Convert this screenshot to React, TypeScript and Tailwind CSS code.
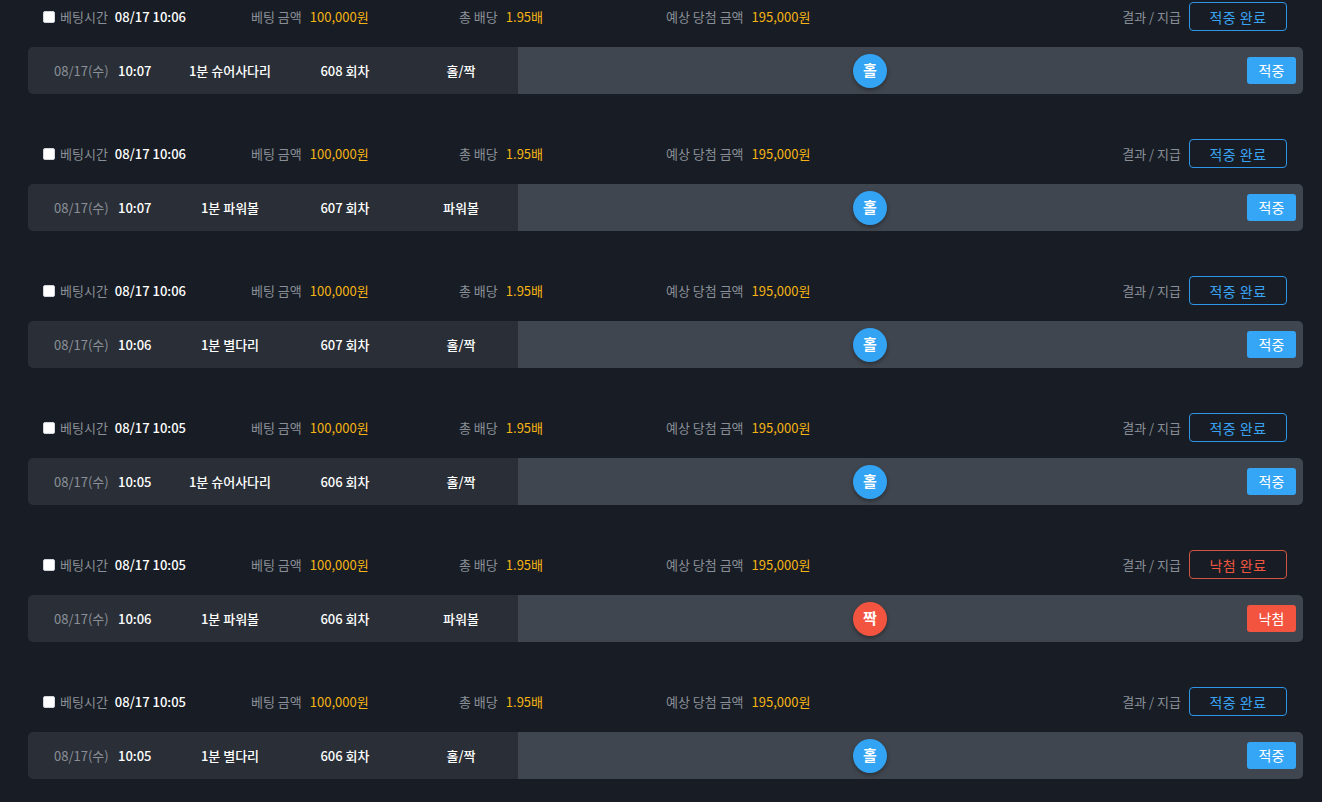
import React from 'react';

type Bet = {
  betTime: string;
  time: string;
  game: string;
  round: string;
  kind: string;
  pick: '홀' | '짝';
  win: boolean;
};

const BETS: Bet[] = [
  { betTime: '08/17 10:06', time: '10:07', game: '1분 슈어사다리', round: '608 회차', kind: '홀/짝', pick: '홀', win: true },
  { betTime: '08/17 10:06', time: '10:07', game: '1분 파워볼', round: '607 회차', kind: '파워볼', pick: '홀', win: true },
  { betTime: '08/17 10:06', time: '10:06', game: '1분 별다리', round: '607 회차', kind: '홀/짝', pick: '홀', win: true },
  { betTime: '08/17 10:05', time: '10:05', game: '1분 슈어사다리', round: '606 회차', kind: '홀/짝', pick: '홀', win: true },
  { betTime: '08/17 10:05', time: '10:06', game: '1분 파워볼', round: '606 회차', kind: '파워볼', pick: '짝', win: false },
  { betTime: '08/17 10:05', time: '10:05', game: '1분 별다리', round: '606 회차', kind: '홀/짝', pick: '홀', win: true },
];

const BetBlock: React.FC<{ bet: Bet }> = ({ bet }) => {
  return (
    <div className="mb-[45px]">
      <div className="flex items-center h-[29px] pl-[15px] pr-[16px] text-[13px] leading-none">
        <div className="w-[208px] flex items-center">
          <span className="w-[12px] h-[12px] rounded-[2px] bg-white border border-gray-300 mr-[5px]" />
          <span className="text-[#8a8f97]">베팅시간</span>
          <span className="ml-[7px] text-white font-medium">{bet.betTime}</span>
        </div>
        <div className="w-[208px] flex items-center">
          <span className="text-[#8a8f97]">베팅 금액</span>
          <span className="ml-[8px] text-[#f5b414]">100,000원</span>
        </div>
        <div className="w-[207px] flex items-center">
          <span className="text-[#8a8f97]">총 배당</span>
          <span className="ml-[8px] text-[#f5b414]">1.95배</span>
        </div>
        <div className="flex items-center">
          <span className="text-[#8a8f97]">예상 당첨 금액</span>
          <span className="ml-[8px] text-[#f5b414]">195,000원</span>
        </div>
        <div className="ml-auto flex items-center">
          <span className="text-[#8a8f97]">결과 / 지급</span>
          {bet.win ? (
            <span className="ml-[8px] w-[98px] h-[29px] flex items-center justify-center rounded-[4px] border border-[#2f95e6] text-[#3aa2f2] text-[14px] tracking-[0.5px]">
              적중 완료
            </span>
          ) : (
            <span className="ml-[8px] w-[98px] h-[29px] flex items-center justify-center rounded-[4px] border border-[#d2533f] text-[#f0553f] text-[14px] tracking-[0.5px]">
              낙첨 완료
            </span>
          )}
        </div>
      </div>

      <div className="mt-[16px] h-[47px] rounded-[5px] overflow-hidden flex text-[13px]">
        <div className="w-[490px] bg-[#2a2f37] flex items-center pl-[26px]">
          <span className="w-[64px] text-[#8a8f97]">08/17(수)</span>
          <span className="w-[40px] text-white font-medium">{bet.time}</span>
          <span className="w-[144px] text-center text-white font-medium">{bet.game}</span>
          <span className="w-[86px] text-center text-white font-medium">{bet.round}</span>
          <span className="ml-[16px] w-[114px] text-center text-white font-medium">{bet.kind}</span>
        </div>
        <div className="flex-1 bg-[#40464f] flex items-center pr-[7px]">
          <div className="flex-1 mr-[25px] flex justify-center">
            {bet.pick === '홀' ? (
              <span className="w-[34px] h-[34px] rounded-full bg-[#33a3f4] text-white text-[15px] font-bold flex items-center justify-center shadow-[0_2px_4px_rgba(0,0,0,0.35)]">
                홀
              </span>
            ) : (
              <span className="w-[34px] h-[34px] rounded-full bg-[#f2543f] text-white text-[15px] font-bold flex items-center justify-center shadow-[0_2px_4px_rgba(0,0,0,0.35)]">
                짝
              </span>
            )}
          </div>
          {bet.win ? (
            <span className="w-[49px] h-[27px] rounded-[3px] bg-[#35a6f6] text-white text-[14px] flex items-center justify-center">
              적중
            </span>
          ) : (
            <span className="w-[49px] h-[27px] rounded-[3px] bg-[#f2543f] text-white text-[14px] flex items-center justify-center">
              낙첨
            </span>
          )}
        </div>
      </div>
    </div>
  );
};

export default function App() {
  return (
    <div
      className="h-[802px] bg-[#181d25] pl-[28px] pr-[19px] pt-[2px] overflow-hidden"
      style={{ fontFamily: '"Noto Sans CJK KR", "Noto Sans", sans-serif' }}
    >
      {BETS.map((bet, i) => (
        <BetBlock key={i} bet={bet} />
      ))}
    </div>
  );
}
